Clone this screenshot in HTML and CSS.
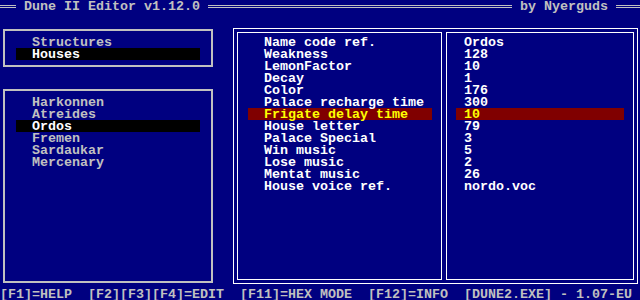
FILE: index.html
```html
<!DOCTYPE html>
<html lang="en">
<head>
  <meta charset="UTF-8" />
  <meta name="viewport" content="width=device-width, initial-scale=1.0" />
  <title>Dune II Editor</title>
  <link rel="stylesheet" href="styles.css">
</head>
<body>
  <div class="screen">
    <div class="title">
      <span class="dline dline-start"></span>
      <span>Dune II Editor v1.12.0</span>
      <span class="dline dline-grow"></span>
      <span>by Nyerguds</span>
      <span class="dline dline-end"></span>
    </div>

    <div class="box box-cat">
      <ul class="menu">
        <li>Structures</li>
        <li class="sel">Houses</li>
      </ul>
    </div>

    <div class="box box-list">
      <ul class="menu">
        <li>Harkonnen</li>
        <li>Atreides</li>
        <li class="sel">Ordos</li>
        <li>Fremen</li>
        <li>Sardaukar</li>
        <li>Mercenary</li>
      </ul>
    </div>

    <div class="panel">
      <div class="col col-keys">
        <ul class="fields">
          <li>Name code ref.</li>
          <li>Weakness</li>
          <li>LemonFactor</li>
          <li>Decay</li>
          <li>Color</li>
          <li>Palace recharge time</li>
          <li class="sel">Frigate delay time</li>
          <li>House letter</li>
          <li>Palace Special</li>
          <li>Win music</li>
          <li>Lose music</li>
          <li>Mentat music</li>
          <li>House voice ref.</li>
        </ul>
      </div>
      <div class="col col-vals">
        <ul class="fields">
          <li>Ordos</li>
          <li>128</li>
          <li>10</li>
          <li>1</li>
          <li>176</li>
          <li>300</li>
          <li class="sel">10</li>
          <li>79</li>
          <li>3</li>
          <li>5</li>
          <li>2</li>
          <li>26</li>
          <li>nordo.voc</li>
        </ul>
      </div>
    </div>

    <div class="status">
      <span>[F1]=HELP</span>
      <span>[F2][F3][F4]=EDIT</span>
      <span>[F11]=HEX MODE</span>
      <span>[F12]=INFO</span>
      <span>[DUNE2.EXE] - 1.07-EU</span>
    </div>
  </div>
</body>
</html>
```

FILE: styles.css
```css
body {
  margin: 0;
  background-color: #000080;
  font-family: "Liberation Mono", "DejaVu Sans Mono", monospace;
  font-size: 13.333px;
  font-weight: bold;
  line-height: 12px;
  color: #c0c0c0;
}

* {
  box-sizing: border-box;
}

/* 80x25 text screen, 8x12 cells */
.screen {
  width: 640px;
  height: 300px;
  display: grid;
  grid-template-columns: repeat(80, 8px);
  grid-template-rows: repeat(25, 12px);
  overflow: hidden;
}

ul {
  list-style: none;
  margin: 0;
  padding: 0;
}

li {
  height: 12px;
  padding-top: 1px;
  white-space: pre;
}

.title {
  grid-column: 1 / -1;
  grid-row: 1;
  display: flex;
  gap: 8px;
  padding-top: 1px;
  white-space: pre;
}

.dline {
  height: 3px;
  margin-top: 4px;
  border-top: 1px solid #c0c0c0;
  border-bottom: 1px solid #c0c0c0;
}

.dline-start {
  width: 16px;
}

.dline-grow {
  flex: 1;
}

.dline-end {
  width: 24px;
}

.box {
  border: 2px solid #c0c0c0;
  margin: 5px 3px 5px 3px;
  padding: 5px 0 0 11px;
}

.box-cat {
  grid-column: 1 / 28;
  grid-row: 3 / 7;
}

.box-list {
  grid-column: 1 / 28;
  grid-row: 8 / 25;
}

.menu li {
  width: 184px;
  padding-left: 16px;
}

.menu .sel {
  background-color: #000000;
  color: #ffffff;
}

.panel {
  grid-column: 30 / 81;
  grid-row: 3 / 25;
  margin: 4px 2px 4px 1px;
  border: 1px solid #ffffff;
  padding: 3px;
  display: flex;
  gap: 4px;
}

.col {
  border: 1px solid #ffffff;
  padding-top: 3px;
  color: #ffffff;
}

.col-keys {
  width: 205px;
  padding-left: 10px;
}

.col-vals {
  flex: 1;
  padding-left: 9px;
}

.col-keys li {
  width: 184px;
  padding-left: 16px;
}

.col-vals li {
  width: 168px;
  padding-left: 8px;
}

.fields .sel {
  background-color: #800000;
  color: #ffff00;
}

.status {
  grid-column: 1 / -1;
  grid-row: 25;
  display: flex;
  gap: 16px;
  padding-top: 1px;
  white-space: pre;
}
```
